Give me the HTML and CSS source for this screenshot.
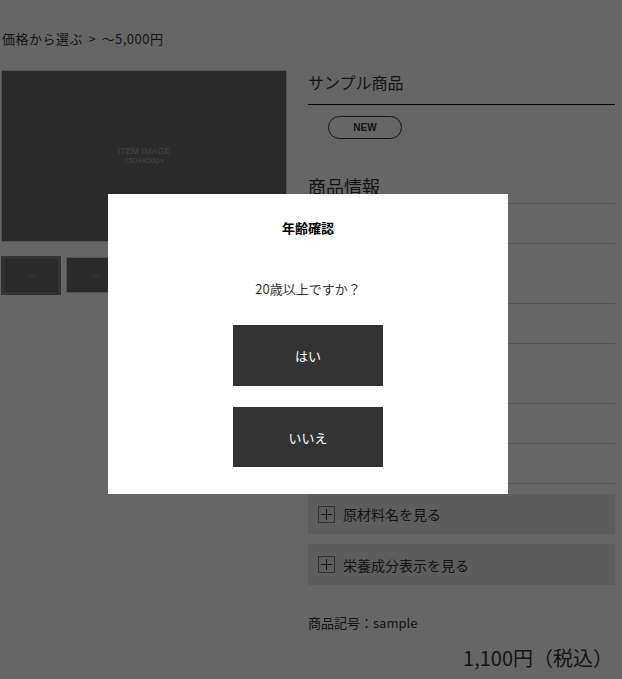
FILE: index.html
```html
<!DOCTYPE html>
<html lang="ja">
<head>
<meta charset="utf-8">
<title>サンプル商品</title>
<link rel="stylesheet" href="styles.css">
</head>
<body>
<div class="page">
  <div class="breadcrumb">価格から選ぶ &gt; ～5,000円</div>
  <div class="product">
    <div class="gallery">
      <div class="main-image">
        <span class="img-title">ITEM IMAGE</span>
        <span class="img-size">750×450px</span>
      </div>
      <div class="thumbs">
        <div class="thumb thumb-active"><span>ITEM</span></div>
        <div class="thumb"><span>ITEM</span></div>
        <div class="thumb"><span>ITEM</span></div>
        <div class="thumb"><span>ITEM</span></div>
      </div>
    </div>
    <div class="info">
      <h1 class="name">サンプル商品</h1>
      <span class="badge">NEW</span>
      <h2 class="section-title">商品情報</h2>
      <div class="spec">
        <div class="spec-row"></div>
        <div class="spec-row tall"></div>
        <div class="spec-row"></div>
        <div class="spec-row tall"></div>
        <div class="spec-row"></div>
        <div class="spec-row"></div>
      </div>
      <div class="acc">
        <svg class="plus" width="17" height="17" viewBox="0 0 17 17"><rect x="0.5" y="0.5" width="16" height="16" fill="none" stroke="#7a7a7a"/><path d="M3 8.5H14M8.5 3V14" stroke="#333" stroke-width="1"/></svg>
        <span>原材料名を見る</span>
      </div>
      <div class="acc">
        <svg class="plus" width="17" height="17" viewBox="0 0 17 17"><rect x="0.5" y="0.5" width="16" height="16" fill="none" stroke="#7a7a7a"/><path d="M3 8.5H14M8.5 3V14" stroke="#333" stroke-width="1"/></svg>
        <span>栄養成分表示を見る</span>
      </div>
      <div class="sku">商品記号：sample</div>
      <div class="price">1,100円（税込）</div>
    </div>
  </div>
</div>

<div class="overlay"></div>
<div class="modal">
  <div class="modal-title">年齢確認</div>
  <div class="modal-question">20歳以上ですか？</div>
  <button class="modal-btn btn-yes">はい</button>
  <button class="modal-btn btn-no">いいえ</button>
</div>
</body>
</html>
```
FILE: styles.css
```css
* { box-sizing: border-box; }
html, body {
  margin: 0;
  padding: 0;
  background: #fff;
  color: #333;
  font-family: "Noto Sans CJK JP", "Noto Sans", sans-serif;
  overflow: hidden;
}
.page {
  padding: 29px 7px 0 1px;
}
.breadcrumb {
  font-size: 13px;
  line-height: 20px;
  padding-left: 1px;
  margin-bottom: 21px;
  letter-spacing: 0.5px;
  word-spacing: 2px;
}
.product {
  display: flex;
  gap: 21px;
  align-items: flex-start;
}
.gallery {
  width: 286px;
  flex: none;
}
.main-image {
  height: 172px;
  background: #696969;
  border: 1px solid #d2d2d2;
  display: flex;
  flex-direction: column;
  align-items: center;
  justify-content: center;
  color: #a8a8a8;
  font-family: "Liberation Sans", sans-serif;
}
.img-title { font-size: 9px; line-height: 10px; }
.img-size { font-size: 8px; line-height: 10px; }
.thumbs {
  display: flex;
  gap: 5px;
  margin-top: 14px;
  align-items: flex-start;
}
.thumb {
  width: 60px;
  height: 36px;
  margin-top: 1px;
  background: #696969;
  border: 1px solid #d2d2d2;
  display: flex;
  align-items: center;
  justify-content: center;
  font-family: "Liberation Sans", sans-serif;
  font-size: 4px;
  color: #8a8a8a;
}
.thumb-active {
  height: 39px;
  margin-top: 0;
  border: 3px solid #808080;
}
.info {
  width: 307px;
  flex: none;
}
.name {
  margin: 0;
  font-size: 16px;
  font-weight: normal;
  line-height: 24px;
  padding-bottom: 10px;
  border-bottom: 1px solid #000;
}
.badge {
  display: inline-flex;
  align-items: center;
  justify-content: center;
  width: 74px;
  height: 23px;
  margin: 11px 0 0 20px;
  border: 1px solid #333;
  border-radius: 12px;
  font-family: "Liberation Sans", sans-serif;
  font-size: 10px;
  font-weight: bold;
  color: #333;
}
.section-title {
  margin: 34px 0 4px;
  font-size: 18px;
  font-weight: normal;
  line-height: 26px;
}
.spec {
  border-top: 1px solid #cfcfcf;
}
.spec-row {
  height: 40px;
  border-bottom: 1px solid #cfcfcf;
}
.spec-row.tall { height: 60px; }
.acc {
  margin-top: 10px;
  height: 40px;
  background: #e9e9e9;
  display: flex;
  align-items: center;
  gap: 8px;
  padding-left: 10px;
  font-size: 14px;
}
.acc + .acc { height: 41px; }
.plus { flex: none; display: block; }
.sku {
  margin-top: 28px;
  font-size: 13px;
  line-height: 20px;
}
.price {
  margin-top: 10px;
  text-align: right;
  font-size: 20px;
  line-height: 30px;
  padding-right: 2px;
}
.overlay {
  position: fixed;
  inset: 0;
  background: rgba(0, 0, 0, 0.6);
}
.modal {
  position: fixed;
  left: 108px;
  top: 194px;
  width: 400px;
  height: 300px;
  background: #fff;
  display: flex;
  flex-direction: column;
  align-items: center;
  padding-top: 24px;
}
.modal-title {
  font-size: 13px;
  font-weight: bold;
  line-height: 20px;
  color: #000;
}
.modal-question {
  margin-top: 41px;
  font-size: 13px;
  line-height: 20px;
  color: #333;
}
.modal-btn {
  width: 150px;
  height: 61px;
  margin-top: 26px;
  border: 0;
  background: #333;
  color: #fff;
  font-family: inherit;
  font-size: 13px;
  padding: 0;
}
.btn-no {
  height: 60px;
  margin-top: 21px;
}
```
